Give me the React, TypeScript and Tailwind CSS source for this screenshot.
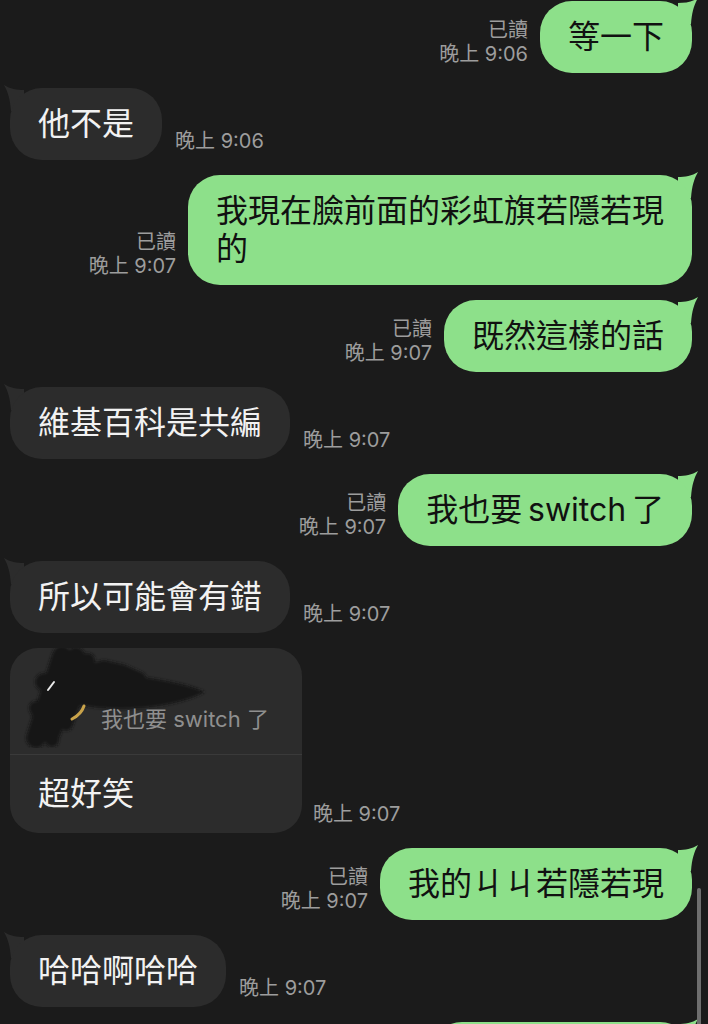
const GREEN = "#8de08a";

function Tail({ side, color }: { side: "left" | "right"; color: string }) {
  return (
    <svg
      width="20"
      height="30"
      viewBox="0 0 20 30"
      className={`absolute top-[-3px] ${side === "right" ? "right-[-6px]" : "left-[-6px] -scale-x-100"}`}
    >
      <path d="M0,5 C7,5 14,4 20,0 C16,7 14,14 13,26 L0,26 Z" fill={color} />
    </svg>
  );
}

function Outgoing({
  children,
  time,
  tall,
}: {
  children?: React.ReactNode;
  time: string;
  tall?: boolean;
}) {
  return (
    <div className="flex justify-end items-end gap-[12px] pr-[16px]">
      <div className="mb-[7px] text-right text-[20px] leading-[24px] text-[#9d9d9d]">
        <div>已讀</div>
        <div>{time}</div>
      </div>
      <div className="relative">
        <Tail side="right" color={GREEN} />
        <div
          className={`relative rounded-[32px] bg-[#8de08a] px-[28px] py-[16px] text-[32px] text-[#111] ${
            tall ? "leading-[38px] py-[17px]" : "leading-[40px]"
          }`}
        >
          {children}
        </div>
      </div>
    </div>
  );
}

function Incoming({ children, time }: { children: React.ReactNode; time: string }) {
  return (
    <div className="flex items-end gap-[13px] pl-[10px]">
      <div className="relative">
        <Tail side="left" color="#2c2c2c" />
        <div className="relative rounded-[32px] bg-[#2c2c2c] px-[28px] py-[16px] text-[32px] leading-[40px] text-[#f2f2f2]">
          {children}
        </div>
      </div>
      <div className="mb-[7px] text-[20px] leading-[24px] text-[#9d9d9d]">{time}</div>
    </div>
  );
}

// redacted avatar: a black marker scribble over the quoted message
function Scribble() {
  return (
    <svg width="190" height="100" viewBox="0 0 190 100" className="absolute left-[12px] top-[0px]">
      <defs>
        <filter id="soft" x="-10%" y="-10%" width="120%" height="120%">
          <feGaussianBlur stdDeviation="1.4" />
        </filter>
      </defs>
      <g fill="#131313" stroke="#131313" strokeLinecap="round" strokeLinejoin="round" filter="url(#soft)">
        <path d="M40,26 C62,16 92,20 112,28 C138,32 165,36 182,44 C160,56 120,62 86,60 C62,59 44,54 36,44 Z" />
        <path d="M40,8 L14,90" strokeWidth="20" fill="none" />
        <path d="M54,8 L30,84" strokeWidth="18" fill="none" />
        <path d="M66,12 L44,76" strokeWidth="14" fill="none" />
        <path d="M22,34 L74,40 L24,66" strokeWidth="18" fill="none" />
        <path d="M60,24 L82,18 L100,22 L118,30" strokeWidth="12" fill="none" />
        <path d="M14,60 L30,92" strokeWidth="14" fill="none" />
      </g>
      <path d="M26,42 L32,34" stroke="#eaeaea" strokeWidth="2" strokeLinecap="round" />
      <path d="M62,58 C60,64 56,68 50,71" stroke="#c9a34a" strokeWidth="3" fill="none" strokeLinecap="round" />
    </svg>
  );
}

export default function App() {
  return (
    <div className="relative h-[1024px] overflow-hidden bg-[#1b1b1b] font-['Inter','Noto_Sans_CJK_TC',sans-serif]">
      <div className="flex flex-col gap-[15px] pt-[1px]">
        <Outgoing time="晚上 9:06">等一下</Outgoing>
        <Incoming time="晚上 9:06">他不是</Incoming>
        <Outgoing time="晚上 9:07" tall>
          我現在臉前面的彩虹旗若隱若現
          <br />的
        </Outgoing>
        <Outgoing time="晚上 9:07">既然這樣的話</Outgoing>
        <Incoming time="晚上 9:07">維基百科是共編</Incoming>
        <Outgoing time="晚上 9:07">{"我也要\u2009switch\u2009了"}</Outgoing>
        <Incoming time="晚上 9:07">所以可能會有錯</Incoming>

        <div className="flex items-end gap-[11px] pl-[10px]">
          <div className="relative w-[292px] overflow-hidden rounded-[28px] bg-[#2c2c2c]">
            <div className="relative flex h-[106px] items-end pb-[20px] pl-[91px]">
              <Scribble />
              <span className="relative text-[22px] leading-[30px] text-[#8f8f8f]">我也要 switch 了</span>
            </div>
            <div className="h-px bg-[#3a3a3a]" />
            <div className="flex h-[78px] items-center px-[28px] text-[32px] leading-[40px] text-[#f2f2f2]">超好笑</div>
          </div>
          <div className="mb-[7px] text-[20px] leading-[24px] text-[#9d9d9d]">晚上 9:07</div>
        </div>

        <Outgoing time="晚上 9:07">我的ㄐㄐ若隱若現</Outgoing>
        <Incoming time="晚上 9:07">哈哈啊哈哈</Incoming>

        {/* next message, only its top edge is on screen */}
        <div className="flex justify-end pr-[16px]">
          <div className="relative">
            <Tail side="right" color={GREEN} />
            <div className="relative h-[72px] w-[262px] rounded-[32px] bg-[#8de08a]" />
          </div>
        </div>
      </div>

      <div className="absolute right-[7px] top-[888px] h-[140px] w-[4px] rounded-full bg-[#6e6e6e]" />
    </div>
  );
}
